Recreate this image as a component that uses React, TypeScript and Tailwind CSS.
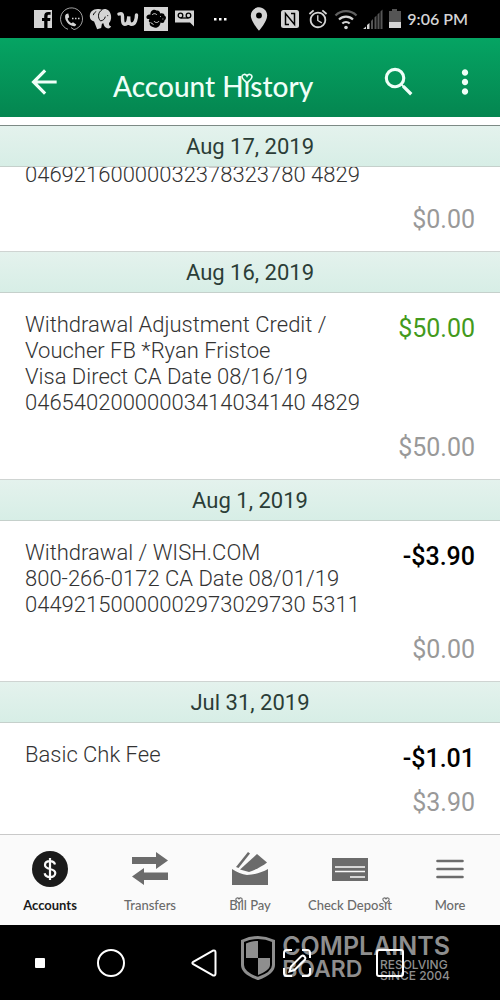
import type { ReactNode } from "react";
import clsx from "clsx";
import { MdAccessAlarm, MdArrowBack, MdLocationOn, MdMoreVert, MdSearch } from "react-icons/md";

type Transaction = {
  date: string;
  lines: string[];
  amount?: string;
  credit?: boolean;
  balance: string;
};

const transactions: Transaction[] = [
  {
    date: "Aug 17, 2019",
    lines: ["04692160000032378323780 4829"],
    balance: "$0.00",
  },
  {
    date: "Aug 16, 2019",
    lines: [
      "Withdrawal Adjustment Credit /",
      "Voucher FB *Ryan Fristoe",
      "Visa Direct CA Date 08/16/19",
      "04654020000003414034140 4829",
    ],
    amount: "$50.00",
    credit: true,
    balance: "$50.00",
  },
  {
    date: "Aug 1, 2019",
    lines: [
      "Withdrawal / WISH.COM",
      "800-266-0172 CA Date 08/01/19",
      "04492150000002973029730 5311",
    ],
    amount: "-$3.90",
    balance: "$0.00",
  },
  {
    date: "Jul 31, 2019",
    lines: ["Basic Chk Fee"],
    amount: "-$1.01",
    balance: "$3.90",
  },
];

function HeartI({ className }: { className: string }) {
  return (
    <span className="relative">
      i
      <svg viewBox="0 0 12 11" className={clsx("absolute left-1/2 -translate-x-1/2", className)}>
        <path
          d="M6 9.8 C3 7.5 1 5.6 1 3.6 C1 1.2 4.6 .4 6 3 C7.4 .4 11 1.2 11 3.6 C11 5.6 9 7.5 6 9.8Z"
          stroke="currentColor"
          strokeWidth="1.6"
        />
      </svg>
    </span>
  );
}

function StatusBar() {
  return (
    <div className="flex h-[38px] items-center justify-between bg-black pr-8 pl-[33px] text-[#d4d4d4]">
      <div className="flex items-center gap-[5px]">
        <svg viewBox="0 0 22 24" className="h-6 w-[22px]" fill="currentColor">
          <path d="M1 3h18v18h-4.5v-7h2.6l.4-3h-3V9.3c0-1 .4-1.5 1.5-1.5h1.6V5.1h-2.4c-2.7 0-4 1.5-4 3.9v2H9v3h2.200v7H1z" />
        </svg>
        <svg viewBox="0 0 24 24" className="size-6" fill="none" stroke="currentColor">
          <path d="M8 22.300A11 11 0 1 1 14 22.600L11 20.500" strokeWidth="1" opacity=".75" />
          <path
            d="M5.200 8.500c-.9 4.800 3.500 10.200 8.800 10.800 1 .1 2-.8 2.200-1.900l-3.200-2.200-1.700 1.100c-1.800-1-3.200-2.800-3.700-4.700l1.600-1.300-.9-3.800c-1.300-.1-2.700.7-3.100 2z"
            fill="currentColor"
            stroke="none"
          />
          <path d="M12 11.500h1.500M15 11.500h1.500M18 11.500h1.500" strokeWidth="1.500" />
        </svg>
        <svg viewBox="0 0 24 24" className="h-6 w-[23px]" fill="currentColor">
          <path d="M9 1.500C4 1.500.8 4.500.8 9c0 3 1.900 4.700 4.500 5.600l3.200 8.200 4.200-1.500.8-4.300 1.500-.5c.5 2.500 1.700 4.600 3.900 5.200 2 .6 3.800-.7 4.200-2.200-2.300.2-2.200-1.500-2.200-3.200 1.600-1.900 2.500-4.500 2.100-7.700C22.400 4.300 19.500 1.500 15.700 1.700c-1.200.1-1.700.3-2.200.6-1-.5-2.500-.8-4.500-.8z" />
          <path
            d="M13.500 2.500C9 5 9 11 12 14c3-.5 4.500-2 5-4.500M4.500 8c.5-2 1.500-3 3-3.700M19.500 8v1"
            fill="none"
            stroke="#000"
            strokeWidth="1"
          />
        </svg>
        <svg viewBox="0 0 22 24" className="h-6 w-[22px]" fill="none" stroke="currentColor" strokeLinecap="round">
          <path
            d="M2 7c3-1 3.500 0 3.500 2.500 0 4 0 7.800 2.500 7.800 2.200 0 3.500-4 3.800-7.800-.2 4 .2 7.800 2.700 7.800C18.500 17.300 19.500 11 19.500 8"
            strokeWidth="3.400"
          />
        </svg>
        <svg viewBox="0 0 24 24" className="size-6">
          <path d="M0 0h24v24H0z" fill="currentColor" />
          <path
            d="M2.500 11C2 8.500 4 7 6.500 7.500 6 4 10 1.500 12.500 3.500c2-.5 4 1 3.500 3 2-.8 4.500 0 4.500 2 2 1 2 3.500 0 5 0 2.500-2.500 3-4 2-.3 4.500-5 6.500-7.500 4.500-2.500-.5-4-2.500-3-4.500-1.500-.5-1.500-2.500-.5-3.500-1.500 0-2.500 0-3-1z"
            fill="#000"
          />
          <path d="M8 8c1.500-2 4-1.500 5 0M10 14c1 2 4 2 5 0M6.500 15.500l3 2M16 9.500h.8M18.500 12h.8" stroke="currentColor" fill="none" />
        </svg>
        <svg viewBox="0 0 25 24" className="h-6 w-[25px]">
          <path d="M2 3.500h19v16l-4-4H2z" fill="currentColor" />
          <g fill="none" stroke="#000" strokeWidth="1.300">
            <circle cx="7.500" cy="8.500" r="2.300" />
            <circle cx="15.500" cy="8.500" r="2.300" />
            <path d="M7.500 11h8" />
          </g>
        </svg>
        <svg viewBox="0 0 24 24" className="size-6" fill="#fff">
          <path d="M11 11h2.500v2.500H11zM16 11h2.500v2.500H16zM21 11h2.500v2.500H21z" />
        </svg>
      </div>
      <div className="flex items-center gap-[5px]">
        <MdLocationOn className="size-7" />
        <svg viewBox="0 0 24 24" className="size-6">
          <rect x="3" y="3" width="18" height="18" rx="2.500" fill="currentColor" />
          <path d="M11 17.500H7.500V6.500L16.500 17.500V6.500H13" fill="none" stroke="#000" strokeWidth="1.500" />
        </svg>
        <MdAccessAlarm className="size-[22px]" />
        <svg viewBox="0 0 24 24" className="size-6" fill="none" stroke="currentColor" strokeWidth="2.200">
          <path d="M1.500 8.500a15 15 0 0 1 21 0" opacity=".45" />
          <path d="M5 12.500a10 10 0 0 1 14 0M8.300 16.500a5.500 5.500 0 0 1 7.400 0" />
          <circle cx="12" cy="20.500" r="1.800" fill="currentColor" stroke="none" />
        </svg>
        <svg viewBox="0 0 20 24" className="h-6 w-5" fill="currentColor">
          <path d="M0 22l3-2.500V22zM4 22v-4l2.500-2V22z" />
          <path d="M8 22v-8l2-2v10zM11.500 22V10.500l2-2V22zM14.500 22V7.500l2-2V22zM17.500 22V4.500l2-2V22z" opacity=".4" />
        </svg>
        <svg viewBox="0 0 14 24" className="h-6 w-[14px]" fill="currentColor">
          <path d="M4 2h5v2h4v11H1V4h3z" opacity=".4" />
          <path d="M1 15h12v6H1z" />
        </svg>
        <span className="font-['Lato',sans-serif] text-base leading-5 font-semibold whitespace-nowrap">9:06 PM</span>
      </div>
    </div>
  );
}

function AppHeader() {
  return (
    <header className="flex h-[79px] items-center bg-linear-to-b from-[#05a463] to-[#048650] pt-2 pr-4 pl-[25px] text-[#effff8]">
      <button aria-label="Back">
        <MdArrowBack className="size-[38px]" />
      </button>
      <h1 className="flex-1 pt-2 pl-[50px] font-['Lato',sans-serif] text-[28px] leading-9 font-medium whitespace-nowrap">
        Account H
        <HeartI className="top-1 h-[11px] w-3 fill-[#04955a]" />
        story
      </h1>
      <div className="flex gap-7">
        <button aria-label="Search">
          <MdSearch className="size-[38px]" />
        </button>
        <button aria-label="More options">
          <MdMoreVert className="size-[38px]" />
        </button>
      </div>
    </header>
  );
}

function TransactionGroup({ item, clipped }: { item: Transaction; clipped: boolean }) {
  return (
    <section>
      <h2
        className={clsx(
          "flex h-[42px] items-center justify-center border-y border-b-[#c5d0cb] bg-linear-to-b from-[#e4f2ed] to-[#d7eee6] pt-0.5 text-[22px] leading-7 text-[#2b3d37]",
          clipped ? "border-t-[#7d8a85]" : "border-t-[#cfd4d2]",
        )}
      >
        {item.date}
      </h2>
      <div className={clsx("flex flex-col px-[25px] pb-[17px]", clipped ? "h-[84px] justify-end overflow-hidden" : "pt-[19px]")}>
        <div className="mb-[18px] flex shrink-0 items-start justify-between">
          <div className="text-[22px] leading-[26px] font-light text-[#333]">
            {item.lines.map((line) => (
              <p key={line} className="whitespace-nowrap">
                {line}
              </p>
            ))}
          </div>
          {item.amount && (
            <p
              className={clsx(
                "pt-1 text-[25px] leading-[25px]",
                item.credit ? "text-[#439a1c]" : "font-medium text-black",
              )}
            >
              {item.amount}
            </p>
          )}
        </div>
        <p className="text-right text-[25px] leading-7 text-[#999]">{item.balance}</p>
      </div>
    </section>
  );
}

function NavItem({ label, icon, active }: { label: ReactNode; icon: ReactNode; active?: boolean }) {
  return (
    <a
      href="#"
      className={clsx(
        "flex flex-1 flex-col items-center gap-[10px] text-[13px] leading-4 whitespace-nowrap",
        active ? "font-bold text-[#1b1b1b]" : "font-medium text-[#6b6b6b]",
      )}
    >
      <svg viewBox="0 0 36 36" className="size-9" fill="currentColor">
        {icon}
      </svg>
      <span>{label}</span>
    </a>
  );
}

function BottomNav() {
  return (
    <nav className="flex border-t border-[#c9c9c9] bg-[#fafafa] pt-4 pb-3 font-['Lato',sans-serif]">
      <NavItem
        active
        label="Accounts"
        icon={
          <>
            <circle cx="18" cy="18" r="18" />
            <path
              d="M18 7v22M23 13.500c-.6-2.300-2.600-3.400-5-3.400-2.900 0-5 1.500-5 3.800 0 5.500 10.300 2.700 10.300 8.200 0 2.400-2.300 4-5.200 4-2.700 0-4.900-1.300-5.500-3.900"
              fill="none"
              stroke="#fafafa"
              strokeWidth="2.200"
            />
          </>
        }
      />
      <NavItem
        label="Transfers"
        icon={<path d="M0 6h24V1l12 8.500L24 18v-5H0zM36 29H12v5L0 25.500 12 17v4.500h24z" />}
      />
      <NavItem
        label={
          <>
            B<HeartI className="top-0 h-[7px] w-2 fill-[#fafafa]" />
            ll Pay
          </>
        }
        icon={
          <>
            <path d="M16 1l2 1.500L6.500 17 4 16z" />
            <path d="M25 3l10 8.500c-5 4-11 7-18 9.500L8 18.500z" />
            <path d="M0 18c5 3 10 5.500 15 6 8-.5 15-2.500 21-6v16H0z" />
          </>
        }
      />
      <NavItem
        label={
          <>
            Check Depos
            <HeartI className="top-0 h-[7px] w-2 fill-[#fafafa]" />t
          </>
        }
        icon={
          <>
            <path d="M0 7h36v23H0z" />
            <path d="M3 16h30M3 20.500h30M18 26h15" stroke="#fafafa" strokeWidth="1.600" />
          </>
        }
      />
      <NavItem
        label="More"
        icon={
          <path d="M5.500 10h25M5.500 18h25M5.500 26h25" stroke="currentColor" strokeWidth="2.600" strokeLinecap="round" />
        }
      />
    </nav>
  );
}

function Watermark() {
  return (
    <div className="absolute top-[10px] right-[50px] flex gap-[7px] text-[#8e8e8e]">
      <svg viewBox="0 0 34 44" className="h-[46px] w-[34px]">
        <path
          d="M17 1.500c5 0 10 1 15.500 3.500v24c0 6-7 10.500-15.500 13.500C8.500 39.500 1.500 35 1.500 29V5C7 2.500 12 1.500 17 1.500z"
          fill="none"
          stroke="currentColor"
          strokeWidth="3"
        />
        <path d="M17 5v17H5V7.500C9 5.800 13 5 17 5zM17 22h12v7c0 4-5.500 7.500-12 10z" fill="currentColor" />
      </svg>
      <div className="font-['Inter',sans-serif] font-semibold whitespace-nowrap">
        <p className="text-[25px] leading-[23px]">COMPLAINTS</p>
        <div className="flex items-center justify-between">
          <p className="text-[23px] leading-[23px]">BOARD</p>
          <p className="text-xs leading-[11px] font-medium">
            RESOLVING
            <br />
            SINCE 2004
          </p>
        </div>
      </div>
    </div>
  );
}

function SystemNav() {
  return (
    <div className="relative flex h-[75px] items-center bg-black pr-16 pl-4 text-white">
      <Watermark />
      <button aria-label="Hide bar" className="relative flex w-12 justify-center">
        <span className="size-[10px] rounded-[1px] bg-white" />
      </button>
      <button aria-label="Home" className="relative flex flex-1 justify-center">
        <span className="size-7 rounded-full border-2 border-white" />
      </button>
      <button aria-label="Back" className="relative flex flex-1 justify-center">
        <svg viewBox="0 0 28 28" className="size-7" fill="none" stroke="currentColor" strokeWidth="2" strokeLinejoin="round">
          <path d="M3.200 12.800L22.500 1.800Q25.500.8 25.500 3.500v21q0 2.700-3 1.700L3.200 15.200Q1.500 14 3.200 12.800z" />
        </svg>
      </button>
      <button aria-label="Capture" className="relative flex flex-1 justify-center">
        <svg viewBox="0 0 28 28" className="size-7" fill="none" stroke="currentColor" strokeWidth="2">
          <path d="M1 9V4Q1 1 4 1h5M19 1h5q3 0 3 3v5M27 19v5q0 3-3 3h-5M9 27H4q-3 0-3-3v-5" />
          <path d="M6.500 22.500l1.500-5L18.500 7q1.500-1 3 .5t.5 3L11.500 21z" />
        </svg>
      </button>
      <button aria-label="Recent apps" className="relative flex flex-1 justify-center">
        <span className="size-7 rounded-[3px] border-2 border-white" />
      </button>
    </div>
  );
}

export default function App() {
  return (
    <div className="flex min-h-screen flex-col bg-white font-['Roboto',sans-serif]">
      <StatusBar />
      <AppHeader />
      <main className="flex-1 pt-2">
        {transactions.map((item, index) => (
          <TransactionGroup key={item.date} item={item} clipped={index === 0} />
        ))}
      </main>
      <BottomNav />
      <SystemNav />
    </div>
  );
}
